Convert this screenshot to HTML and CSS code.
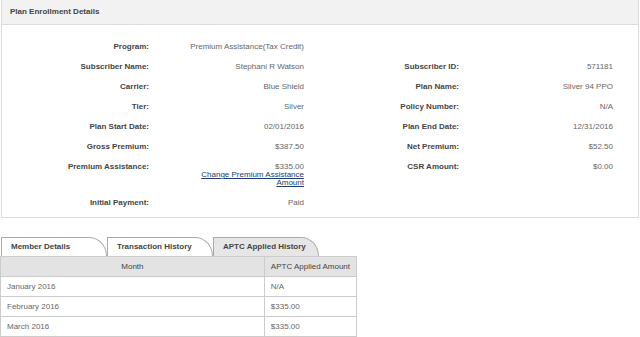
FILE: index.html
```html
<!DOCTYPE html>
<html>
<head>
    <meta charset="UTF-8">
    <title>Plan Enrollment Details</title>
    <link rel="stylesheet" href="styles.css">
</head>
<body>
    <div class="panel">
        <div class="panel-header">Plan Enrollment Details</div>
        <div class="panel-body">
            <div class="row">
                <div class="label">Program:</div>
                <div class="value">Premium Assistance(Tax Credit)</div>
                <div class="label"></div>
                <div class="value"></div>
            </div>
            <div class="row">
                <div class="label">Subscriber Name:</div>
                <div class="value">Stephani R Watson</div>
                <div class="label">Subscriber ID:</div>
                <div class="value">571181</div>
            </div>
            <div class="row">
                <div class="label">Carrier:</div>
                <div class="value">Blue Shield</div>
                <div class="label">Plan Name:</div>
                <div class="value">Silver 94 PPO</div>
            </div>
            <div class="row">
                <div class="label">Tier:</div>
                <div class="value">Silver</div>
                <div class="label">Policy Number:</div>
                <div class="value">N/A</div>
            </div>
            <div class="row">
                <div class="label">Plan Start Date:</div>
                <div class="value">02/01/2016</div>
                <div class="label">Plan End Date:</div>
                <div class="value">12/31/2016</div>
            </div>
            <div class="row">
                <div class="label">Gross Premium:</div>
                <div class="value">$387.50</div>
                <div class="label">Net Premium:</div>
                <div class="value">$52.50</div>
            </div>
            <div class="row">
                <div class="label">Premium Assistance:</div>
                <div class="value">$335.00<br><a href="#">Change Premium Assistance<br>Amount</a></div>
                <div class="label">CSR Amount:</div>
                <div class="value">$0.00</div>
            </div>
            <div class="row">
                <div class="label">Initial Payment:</div>
                <div class="value">Paid</div>
                <div class="label"></div>
                <div class="value"></div>
            </div>
        </div>
    </div>

    <div class="tabs">
        <div class="tab">Member Details</div>
        <div class="tab">Transaction History</div>
        <div class="tab active">APTC Applied History</div>
    </div>
    <table class="history">
        <tr>
            <th class="col-month">Month</th>
            <th class="col-amount">APTC Applied Amount</th>
        </tr>
        <tr>
            <td>January 2016</td>
            <td>N/A</td>
        </tr>
        <tr>
            <td>February 2016</td>
            <td>$335.00</td>
        </tr>
        <tr>
            <td>March 2016</td>
            <td>$335.00</td>
        </tr>
    </table>
</body>
</html>
```

FILE: styles.css
```css
body {
    margin: 0;
    font-family: "Liberation Sans", Arial, sans-serif;
    font-size: 8px;
    color: #666;
    background-color: #fff;
}

.panel {
    width: 636px;
    margin: 0 1px;
    border: 1px solid #ddd;
    border-top: 0;
}

.panel-header {
    height: 24px;
    line-height: 23px;
    padding-left: 8px;
    background-color: #f2f2f2;
    border-bottom: 1px solid #ddd;
    font-weight: bold;
    color: #444;
}

.panel-body {
    padding: 12px 0 4px 0;
}

.row {
    display: grid;
    grid-template-columns: 147px 155px 155px 154px;
}

.label,
.value {
    padding: 6px 0;
    line-height: 8px;
    text-align: right;
}

.label {
    font-weight: bold;
    color: #444;
}

.value a {
    color: #1c3d6e;
}

.tabs {
    display: flex;
    margin-top: 19px;
    padding-left: 1px;
}

.tab {
    width: 95px;
    height: 18px;
    line-height: 18px;
    padding-left: 9px;
    border: 1px solid #aaa;
    border-bottom: 0;
    border-top-right-radius: 18px 19px;
    background-color: #fff;
    font-weight: bold;
    color: #444;
}

.tab.active {
    background-color: #e6e6e6;
}

.history {
    border-collapse: collapse;
    width: 357px;
}

.history th,
.history td {
    height: 19px;
    padding: 0 6px;
    border: 1px solid #ccc;
    text-align: left;
    font-weight: normal;
    white-space: nowrap;
}

.history th {
    background-color: #e3e3e3;
    color: #444;
}

.history th.col-month {
    width: 255px;
    text-align: center;
}
```
